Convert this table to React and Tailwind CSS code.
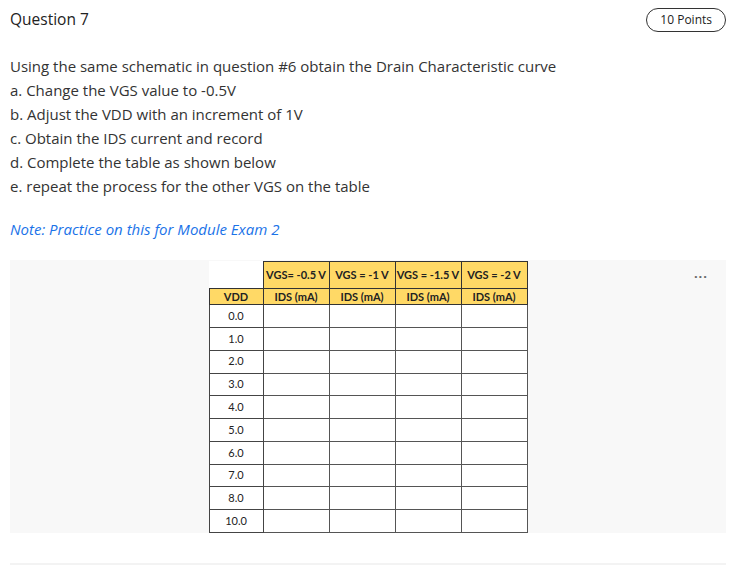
import React from 'react';

const steps = [
    'Using the same schematic in question #6 obtain the Drain Characteristic curve',
    'a. Change the VGS value to -0.5V',
    'b. Adjust the VDD with an increment of 1V',
    'c. Obtain the IDS current and record',
    'd. Complete the table as shown below',
    'e. repeat the process for the other VGS on the table',
];

const vgs = ['VGS= -0.5 V', 'VGS = -1 V', 'VGS = -1.5 V', 'VGS = -2 V'];
const vdd = ['0.0', '1.0', '2.0', '3.0', '4.0', '5.0', '6.0', '7.0', '8.0', '10.0'];

const DrainTable = () => {
    return (
        <table className="border-collapse bg-white text-[11px] text-[#222] font-['Lato','Liberation_Sans',sans-serif]">
            <tbody>
                <tr className="h-[27px]">
                    <td className="w-[54px] p-0"></td>
                    {vgs.map((v) => (
                        <td key={v} className="w-[66px] p-0 border border-[#333] bg-[#ffd966] text-center font-bold align-middle">
                            {v}
                        </td>
                    ))}
                </tr>
                <tr className="h-[16px]">
                    <td className="p-0 border border-[#333] bg-[#ffd966] text-center font-bold leading-none">VDD</td>
                    {vgs.map((v) => (
                        <td key={v} className="p-0 border border-[#333] bg-[#ffd966] text-center font-bold leading-none">
                            IDS (mA)
                        </td>
                    ))}
                </tr>
                {vdd.map((d) => (
                    <tr key={d} className="h-[22.7px]">
                        <td className="p-0 border border-[#444] text-center align-middle">{d}</td>
                        <td className="p-0 border border-[#555]"></td>
                        <td className="p-0 border border-[#555]"></td>
                        <td className="p-0 border border-[#555]"></td>
                        <td className="p-0 border border-[#555]"></td>
                    </tr>
                ))}
            </tbody>
        </table>
    );
};

const App = () => {
    return (
        <div className="w-[748px] h-[565px] bg-white pl-[10px] pr-[22px] font-['Open_Sans','Noto_Sans',sans-serif] text-[#333]">
            <div className="flex items-center justify-between h-[24px] mt-[8px]">
                <h2 className="text-[15.5px] font-normal text-[#222]">Question 7</h2>
                <span className="h-[24px] px-[13px] flex items-center rounded-full border border-[#333] text-[12px] text-[#222]">
                    10 Points
                </span>
            </div>

            <div className="mt-[22px] text-[15px] leading-[24px]">
                {steps.map((s) => (
                    <p key={s}>{s}</p>
                ))}
            </div>

            <p className="mt-[19px] text-[15px] leading-[24px] italic text-[#1b73e8]">
                Note: Practice on this for Module Exam 2
            </p>

            <div className="relative mt-[19px] h-[273px] bg-[#f8f8f8] flex justify-center pt-[1px]">
                <DrainTable />
                <span className="absolute right-[18px] top-[7px] text-[#666] text-[13px] tracking-[1px] font-bold leading-none">
                    ...
                </span>
            </div>

            <div className="mt-[30px] h-[2px] bg-[#f3f3f3]"></div>
        </div>
    );
};

export default App;
